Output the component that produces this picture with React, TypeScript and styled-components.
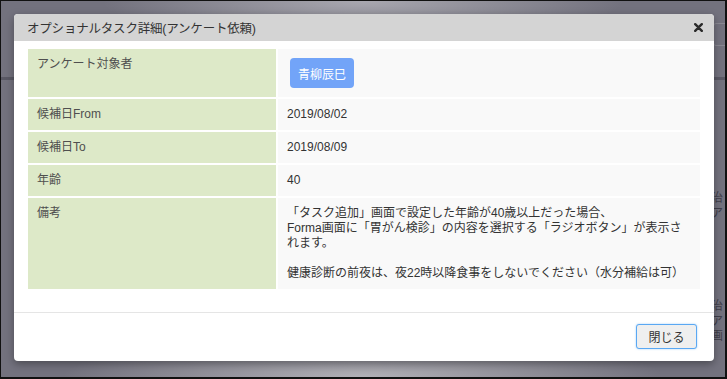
import styled, { createGlobalStyle } from 'styled-components';

const GlobalStyle = createGlobalStyle`
  html, body {
    margin: 0;
    padding: 0;
    width: 727px;
    height: 379px;
    overflow: hidden;
    font-family: "Liberation Sans", "Noto Sans CJK JP", sans-serif;
  }
  * {
    box-sizing: border-box;
  }
`;

const Screen = styled.div`
  position: relative;
  width: 727px;
  height: 379px;
  border-style: solid;
  border-color: #111;
  border-width: 1px 2px 2px 1px;
  background:
    radial-gradient(ellipse 260px 40px at 50% 0%, #a9a8b0 0%, rgba(169, 168, 176, 0) 100%),
    radial-gradient(ellipse 300px 40px at 50% 100%, #b2b1b7 0%, rgba(178, 177, 183, 0) 100%),
    #73727e;
  overflow: hidden;
`;

// うしろのページがうっすら見えている部分
const BackStrip = styled.div`
  position: absolute;
  left: 0;
  right: 0;
  top: 76px;
  height: 3px;
  background: #5a5965;
`;

const BackBox = styled.div`
  position: absolute;
  right: -8px;
  top: 22px;
  width: 20px;
  height: 23px;
  border: 1px solid #8a8993;
  border-radius: 3px;
`;

const BackText = styled.div<{ $top: number }>`
  position: absolute;
  right: 2px;
  top: ${(p) => p.$top}px;
  width: 12px;
  font-size: 12px;
  line-height: 15px;
  color: #3f3e4a;
  overflow: hidden;
`;

const Overlay = styled.div`
  position: absolute;
  inset: 0;
  padding: 13px 0 0 13px;
`;

const Modal = styled.div`
  width: 700px;
  background: #fff;
  border-radius: 4px;
  box-shadow: 0 3px 9px rgba(0, 0, 0, 0.35);
  overflow: hidden;
`;

const Header = styled.div`
  height: 27px;
  background: #d4d4d4;
  display: flex;
  align-items: center;
  justify-content: space-between;
  padding: 0 11px 0 13px;
`;

const Title = styled.div`
  font-size: 12.5px;
  color: #333;
  letter-spacing: -0.2px;
`;

const CloseX = styled.button`
  border: none;
  background: none;
  padding: 0;
  width: 9px;
  height: 9px;
  display: flex;
  cursor: pointer;
`;

const Body = styled.div`
  padding: 8px 14px 23px 14px;
`;

const Grid = styled.div`
  display: grid;
  grid-template-columns: 248px 1fr;
  column-gap: 2px;
  row-gap: 2px;
`;

const Label = styled.div`
  background: #dde9c8;
  color: #4f4f4f;
  font-size: 12px;
  line-height: 15px;
  padding: 8px 9px;
`;

const Value = styled.div`
  background: #f9f9f9;
  color: #333;
  font-size: 12px;
  line-height: 15px;
  padding: 8px 9px;
`;

const PersonButton = styled.button`
  display: inline-block;
  margin: 1px 0 1px 3px;
  height: 30px;
  padding: 0 8px;
  border: none;
  border-radius: 4px;
  background: #72a4f8;
  color: #fff;
  font-family: inherit;
  font-size: 12px;
  cursor: pointer;
`;

const Footer = styled.div`
  border-top: 1px solid #e5e5e5;
  height: 49px;
  display: flex;
  justify-content: flex-end;
  align-items: flex-start;
  padding: 11px 17px 0 0;
`;

const CloseButton = styled.button`
  width: 61px;
  height: 25px;
  background: #efefef;
  border: 1px solid #5aa8f3;
  border-radius: 3px;
  box-shadow: 0 0 2px rgba(90, 168, 243, 0.6);
  color: #333;
  font-family: inherit;
  font-size: 12px;
  padding: 0;
  cursor: pointer;
`;

const rows = [
  { label: '候補日From', value: '2019/08/02' },
  { label: '候補日To', value: '2019/08/09' },
  { label: '年齢', value: '40' },
];

export default function App() {
  return (
    <>
      <GlobalStyle />
      <Screen>
        <BackStrip />
        <BackBox />
        <BackText $top={190}>治<br />ア</BackText>
        <BackText $top={298}>治<br />ア<br />画</BackText>
        <Overlay>
          <Modal>
            <Header>
              <Title>オプショナルタスク詳細(アンケート依頼)</Title>
              <CloseX aria-label="close">
                <svg width="9" height="9" viewBox="0 0 9 9">
                  <path d="M1.2 1.2 L7.8 7.8 M7.8 1.2 L1.2 7.8" stroke="#2b2b2b" strokeWidth="2.4" strokeLinecap="round" />
                </svg>
              </CloseX>
            </Header>
            <Body>
              <Grid>
                <Label>アンケート対象者</Label>
                <Value>
                  <PersonButton>青柳辰巳</PersonButton>
                </Value>
                {rows.map((r) => (
                  <>
                    <Label key={r.label + '-l'}>{r.label}</Label>
                    <Value key={r.label + '-v'}>{r.value}</Value>
                  </>
                ))}
                <Label>備考</Label>
                <Value>
                  「タスク追加」画面で設定した年齢が40歳以上だった場合、
                  <br />
                  Forma画面に「胃がん検診」の内容を選択する「ラジオボタン」が表示されます。
                  <br />
                  <br />
                  健康診断の前夜は、夜22時以降食事をしないでください（水分補給は可）
                </Value>
              </Grid>
            </Body>
            <Footer>
              <CloseButton>閉じる</CloseButton>
            </Footer>
          </Modal>
        </Overlay>
      </Screen>
    </>
  );
}
